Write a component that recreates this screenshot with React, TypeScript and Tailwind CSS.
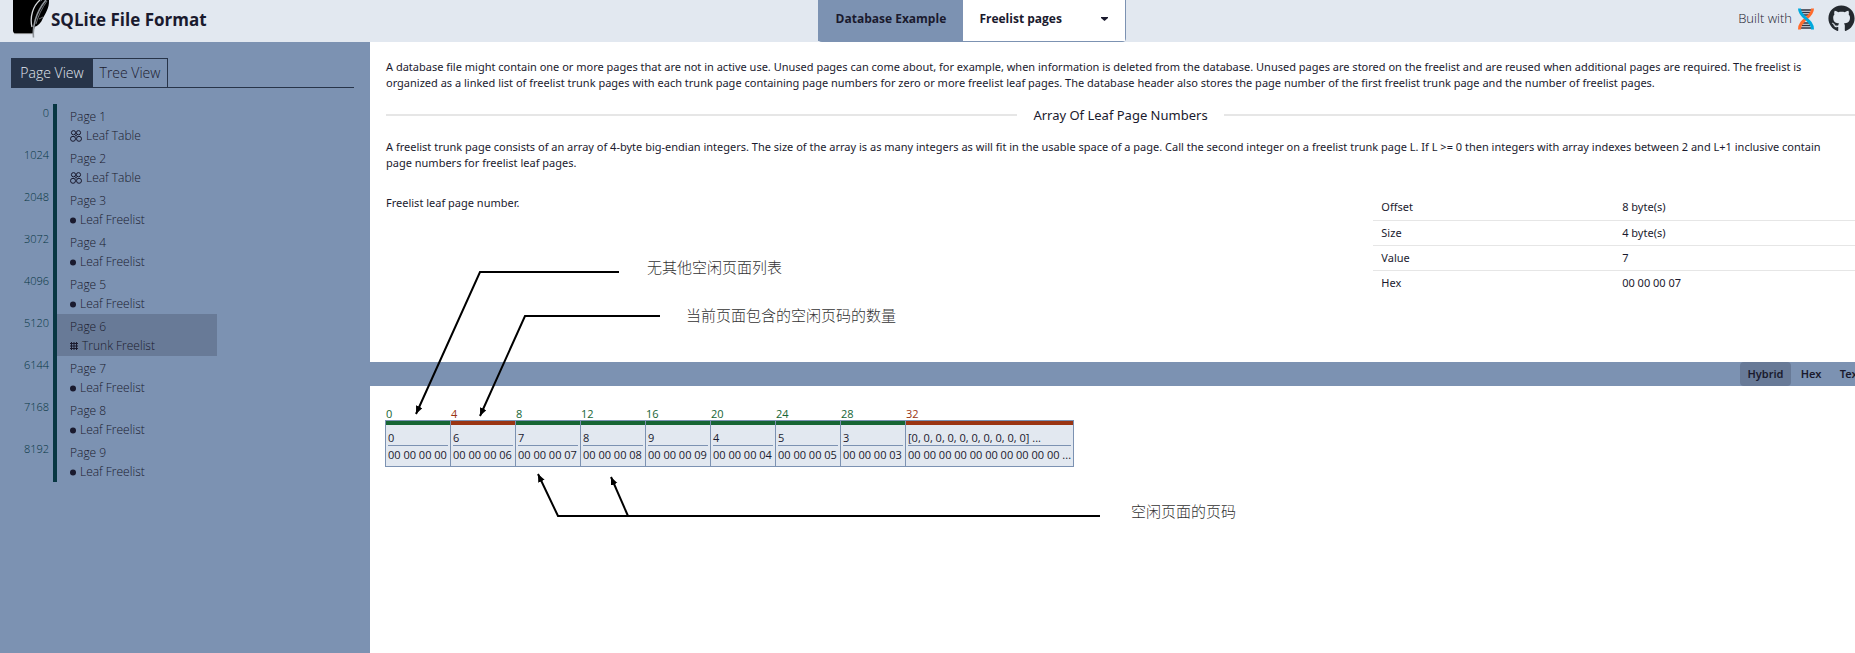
import { FaGithub } from 'react-icons/fa';

type Page = { offset: number; icon: 'table' | 'leaf' | 'trunk'; kind: string };

const pages: Page[] = [
  { offset: 0, icon: 'table', kind: 'Leaf Table' },
  { offset: 1024, icon: 'table', kind: 'Leaf Table' },
  { offset: 2048, icon: 'leaf', kind: 'Leaf Freelist' },
  { offset: 3072, icon: 'leaf', kind: 'Leaf Freelist' },
  { offset: 4096, icon: 'leaf', kind: 'Leaf Freelist' },
  { offset: 5120, icon: 'trunk', kind: 'Trunk Freelist' },
  { offset: 6144, icon: 'leaf', kind: 'Leaf Freelist' },
  { offset: 7168, icon: 'leaf', kind: 'Leaf Freelist' },
  { offset: 8192, icon: 'leaf', kind: 'Leaf Freelist' },
];

const cells = [
  { offset: 0, value: '0', hex: '00 00 00 00', pointer: false },
  { offset: 4, value: '6', hex: '00 00 00 06', pointer: true },
  { offset: 8, value: '7', hex: '00 00 00 07', pointer: false },
  { offset: 12, value: '8', hex: '00 00 00 08', pointer: false },
  { offset: 16, value: '9', hex: '00 00 00 09', pointer: false },
  { offset: 20, value: '4', hex: '00 00 00 04', pointer: false },
  { offset: 24, value: '5', hex: '00 00 00 05', pointer: false },
  { offset: 28, value: '3', hex: '00 00 00 03', pointer: false },
  { offset: 32, value: '[0, 0, 0, 0, 0, 0, 0, 0, 0, 0] ...', hex: '00 00 00 00 00 00 00 00 00 00 ...', pointer: true },
];

const details = [
  ['Offset', '8 byte(s)'],
  ['Size', '4 byte(s)'],
  ['Value', '7'],
  ['Hex', '00 00 00 07'],
];

function Feather() {
  return (
    <svg className="h-[38px] w-[37px]" viewBox="0 0 37 38" aria-hidden="true">
      <path d="M0 0H28L20 33.5H3Q0 33.5 0 30.5Z" fill="#000" />
      <path d="M1 33.6H20" stroke="#888" strokeWidth="0.8" />
      <path d="M21 27C18 18 22 5 29 0H36C36.500 8 32 14 30 18C28 23 25 26 21 27Z" fill="#000" />
      <path d="M20.500 37.500C19.500 28 22 13 33 0" fill="none" stroke="#8f949a" strokeWidth="1.6" />
      <path d="M19 27C16.500 17 20 6 27 0" fill="none" stroke="#d5d8dc" strokeWidth="1.300" />
      <path d="M23 24C25 16 29 8 34 1M26 19L30 17" fill="none" stroke="#9ea3a8" strokeWidth="0.7" />
    </svg>
  );
}

function Dna() {
  return (
    <svg className="h-[22px] w-4" viewBox="0 0 16 22" fill="none" aria-hidden="true">
      <path d="M3 2H13M4 4.500H12M5 7H11M5 15H11M4 17.500H12M3 20H13" stroke="#33333f" strokeWidth="1.4" />
      <path d="M14.500 0.500C14.500 10 1.500 11 1.500 21.500" stroke="#ff6b2c" strokeWidth="3" />
      <path d="M1.500 0.500C1.500 10 14.500 11 14.500 21.500" stroke="#00a9dd" strokeWidth="3" />
    </svg>
  );
}

function PageIcon({ icon }: { icon: Page['icon'] }) {
  if (icon === 'leaf') {
    return (
      <svg className="mr-1 h-2 w-[6px]" viewBox="0 0 6 8" aria-hidden="true">
        <circle cx="3" cy="4.500" r="3" fill="#1a1a2e" />
      </svg>
    );
  }
  if (icon === 'trunk') {
    return (
      <svg className="mr-1 h-2 w-2" viewBox="0 0 8 8" aria-hidden="true">
        <path d="M0 1.500H8M0 4H8M0 6.500H8M1.500 0V8M4 0V8M6.500 0V8" stroke="#1a1a2e" />
      </svg>
    );
  }
  return (
    <svg className="mr-1 h-3 w-3" viewBox="0 0 12 12" fill="none" stroke="#1a1a2e" aria-hidden="true">
      <circle cx="3.500" cy="2.700" r="2.100" />
      <circle cx="8.500" cy="2.700" r="2.100" />
      <circle cx="3" cy="8.800" r="2.500" />
      <circle cx="9" cy="8.800" r="2.500" />
      <path d="M5 4.500L7 6.500M7 4.500L5 6.500" />
    </svg>
  );
}

function Header() {
  return (
    <header className="flex h-[42px] items-start justify-between bg-[#e2e8f0] pl-[13px]">
      <div className="flex gap-px">
        <Feather />
        <h1 className="pt-2 font-['Open_Sans'] text-[17px] leading-6 font-bold">SQLite File Format</h1>
      </div>
      <div className="flex h-[42px] rounded-b-sm border-r border-b border-[#7c92b2] font-['Open_Sans'] text-[12px] font-bold">
        <label htmlFor="example" className="flex w-[145px] items-center justify-center bg-[#7c92b2] pb-[3px] whitespace-nowrap">
          Database Example
        </label>
        <div className="relative w-[162px] bg-white">
          <select id="example" className="h-full w-full appearance-none bg-white pb-[3px] pl-4">
            <option>Freelist pages</option>
          </select>
          <svg className="pointer-events-none absolute top-[17px] right-[17px] h-1 w-[7px]" viewBox="0 0 7 4" aria-hidden="true">
            <path d="M0 0H7V1L3.500 4L0 1Z" fill="#1a1a2e" />
          </svg>
        </div>
      </div>
      <div className="flex h-[37px] items-center">
        <span className="mr-[6px] font-['Open_Sans'] text-[13px] font-light">Built with</span>
        <Dna />
        <a href="#github" aria-label="GitHub" className="ml-[14px]">
          <FaGithub className="size-[27px] text-[#24292f]" />
        </a>
      </div>
    </header>
  );
}

function Sidebar() {
  return (
    <aside className="w-[370px] shrink-0 bg-[#7c92b2] pt-4 pr-4 pl-[11px] font-['Open_Sans'] font-light">
      <div className="flex border-b border-[#273449] text-[14px] leading-7">
        <button className="h-[29px] w-[82px] bg-[#273449] text-[#e2e8f0]">Page View</button>
        <button className="h-[29px] w-[75px] border-t border-r border-[#273449]">Tree View</button>
      </div>
      <ol className="mt-4">
        {pages.map((page, i) => (
          <li key={page.offset} className="flex h-[42px]">
            <span className="w-[42px] pr-1 text-right text-[11px] leading-[17px] text-[#073642]">{page.offset}</span>
            <button
              className={`w-[164px] border-l-4 border-[#073642] pt-1 pl-[13px] text-left text-[12px] ${
                page.icon === 'trunk' ? 'bg-[#687a97]' : ''
              }`}
            >
              <span className="block leading-[18px]">Page {i + 1}</span>
              <span className="flex items-center leading-5">
                <PageIcon icon={page.icon} />
                {page.kind}
              </span>
            </button>
          </li>
        ))}
      </ol>
    </aside>
  );
}

function Description() {
  return (
    <section className="h-80 bg-white pt-[17px] pl-4 text-[11px] leading-4">
      <p className="pr-[10px]">
        A database file might contain one or more pages that are not in active use. Unused pages can come about, for
        example, when information is deleted from the database. Unused pages are stored on the freelist and are reused
        when additional pages are required. The freelist is organized as a linked list of freelist trunk pages with each
        trunk page containing page numbers for zero or more freelist leaf pages. The database header also stores the
        page number of the first freelist trunk page and the number of freelist pages.
      </p>
      <div className="flex h-12 items-center gap-4 before:h-[2px] before:flex-1 before:bg-[#e6e6e6] after:h-[2px] after:flex-1 after:bg-[#e6e6e6]">
        <h2 className="text-[13px]">Array Of Leaf Page Numbers</h2>
      </div>
      <p className="pr-[10px]">
        A freelist trunk page consists of an array of 4-byte big-endian integers. The size of the array is as many
        integers as will fit in the usable space of a page. Call the second integer on a freelist trunk page L. If L
        &gt;= 0 then integers with array indexes between 2 and L+1 inclusive contain page numbers for freelist leaf
        pages.
      </p>
      <div className="mt-6 grid grid-cols-3 gap-3">
        <p className="col-span-2">Freelist leaf page number.</p>
        <table className="w-full table-fixed text-left">
          <tbody>
            {details.map(([name, value]) => (
              <tr key={name} className="h-[25px] border-b border-[#e6e6e6] last:border-0">
                <th className="px-2 font-normal">{name}</th>
                <td className="px-2">{value}</td>
              </tr>
            ))}
          </tbody>
        </table>
      </div>
    </section>
  );
}

function FormatBar() {
  return (
    <nav className="-mr-5 flex h-6 justify-end bg-[#7c92b2] text-[11px] font-semibold">
      <button className="w-[51px] rounded-sm bg-[#687a97]">Hybrid</button>
      <button className="w-10">Hex</button>
      <button className="w-11 pr-1">Text</button>
    </nav>
  );
}

function ByteView() {
  return (
    <section className="flex-1 bg-white pt-[21px] pl-[15px] font-['Open_Sans']">
      <div className="flex text-[11px] leading-[14px]">
        {cells.map((cell) => (
          <button key={cell.offset} className="min-w-[65px] text-left">
            <span className={`block pl-px leading-[13px] ${cell.pointer ? 'text-[#9a3412]' : 'text-[#166534]'}`}>
              {cell.offset}
            </span>
            <span className="block h-[47px] border-y border-l border-[#7c92b2] bg-[#e2e8f0] [button:last-child>&]:border-r">
              <span className={`block h-1 ${cell.pointer ? 'bg-[#9a3412]' : 'bg-[#166534]'}`} />
              <span className="mx-[2px] block border-b border-[#7c92b2] pt-[6px] whitespace-nowrap">{cell.value}</span>
              <span className="mx-[2px] block pt-[2px] whitespace-nowrap">{cell.hex}</span>
            </span>
          </button>
        ))}
      </div>
    </section>
  );
}

function Annotations() {
  return (
    <div className="pointer-events-none absolute top-0 left-0 font-['Noto_Sans_CJK_SC',sans-serif] text-[15px] leading-5 font-light whitespace-nowrap text-[#333]">
      <svg className="h-[653px] w-[1260px]" viewBox="0 0 1260 653" fill="none" stroke="#000" strokeWidth="2" aria-hidden="true">
        <defs>
          <marker id="tip" markerUnits="userSpaceOnUse" markerWidth="9" markerHeight="8" refX="8" refY="3.500" orient="auto">
            <path d="M0 0L8 3.500L0 7Z" fill="#000" stroke="none" />
          </marker>
        </defs>
        <path d="M619 272H480L416 414" markerEnd="url(#tip)" />
        <path d="M660 316H525L480 416" markerEnd="url(#tip)" />
        <path d="M1100 516H558L538 474" markerEnd="url(#tip)" />
        <path d="M628 516L611 477" markerEnd="url(#tip)" />
      </svg>
      <span className="absolute top-[257px] left-[647px]">无其他空闲页面列表</span>
      <span className="absolute top-[305px] left-[686px]">当前页面包含的空闲页码的数量</span>
      <span className="absolute top-[501px] left-[1131px]">空闲页面的页码</span>
    </div>
  );
}

export default function App() {
  return (
    <div className="relative flex min-h-screen flex-col overflow-hidden font-['Noto_Sans',sans-serif] text-[#1a1a2e]">
      <Header />
      <div className="flex flex-1">
        <Sidebar />
        <main className="flex min-w-0 flex-1 flex-col">
          <Description />
          <FormatBar />
          <ByteView />
        </main>
      </div>
      <Annotations />
    </div>
  );
}
